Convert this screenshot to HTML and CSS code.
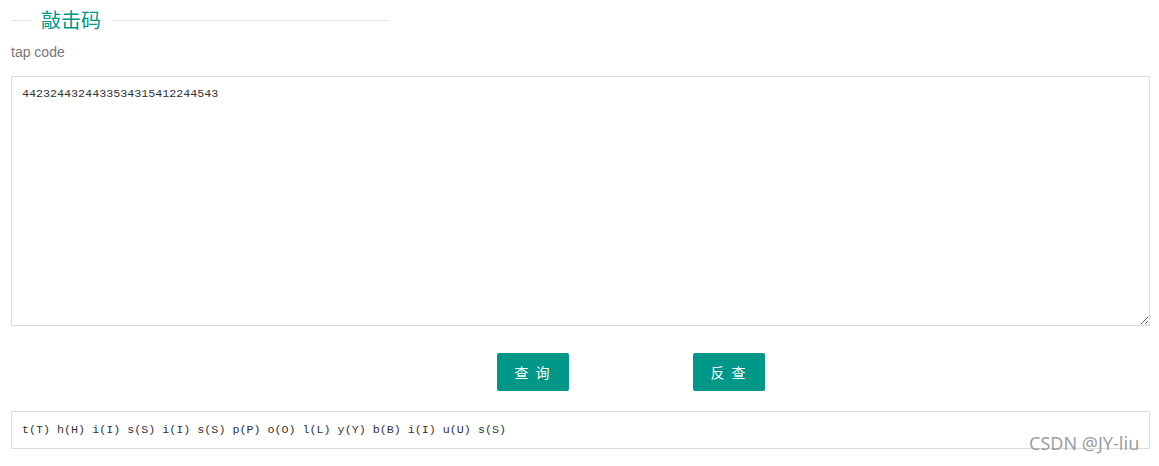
FILE: index.html
```html
<!DOCTYPE html>
<html lang="zh-CN">
<head>
    <meta charset="UTF-8">
    <meta name="viewport" content="width=device-width, initial-scale=1.0">
    <title>敲击码</title>
    <link rel="stylesheet" href="styles.css">
</head>
<body>
    <div class="container">
        <!-- 标题 -->
        <fieldset class="title">
            <legend>敲击码</legend>
        </fieldset>
        <p class="desc">tap code</p>

        <!-- 输入区 -->
        <textarea id="inputText" class="code-input">4423244324433534315412244543</textarea>

        <div class="actions">
            <button type="button" class="btn">查 询</button>
            <button type="button" class="btn">反 查</button>
        </div>

        <!-- 结果 -->
        <div class="result">t(T) h(H) i(I) s(S) i(I) s(S) p(P) o(O) l(L) y(Y) b(B) i(I) u(U) s(S)</div>
    </div>

    <div class="watermark">CSDN @JY-liu</div>
</body>
</html>
```

FILE: styles.css
```css
body {
    margin: 0;
    font-family: "Liberation Sans", Arial, "Noto Sans CJK SC", sans-serif;
    background: white;
    color: #333;
}

.container {
    padding: 0 9px 0 11px;
}

.title {
    width: 379px;
    margin: 5px 0 0 0;
    padding: 0;
    border: none;
    border-top: 1px solid #e6e6e6;
}

.title legend {
    margin-left: 20px;
    padding: 0 10px;
    font-size: 20px;
    line-height: 30px;
    color: #009688;
    font-family: "Noto Sans CJK SC", sans-serif;
}

.desc {
    margin: 7px 0 14px 0;
    font-size: 14px;
    line-height: 20px;
    color: #777;
}

.code-input {
    display: block;
    width: 100%;
    height: 250px;
    margin: 0;
    padding: 9px 10px;
    border: 1px solid #ddd;
    box-sizing: border-box;
    font-family: "Liberation Mono", monospace;
    font-size: 11.7px;
    line-height: 16px;
    color: #333;
    resize: both;
    outline: none;
}

.actions {
    display: flex;
    gap: 124px;
    padding-left: 486px;
    margin-top: 27px;
}

.btn {
    width: 72px;
    height: 38px;
    border: none;
    border-radius: 2px;
    background-color: #009688;
    color: white;
    font-size: 14px;
    font-family: "Noto Sans CJK SC", sans-serif;
    letter-spacing: 2px;
    cursor: pointer;
}

.result {
    margin-top: 20px;
    height: 38px;
    padding: 0 10px;
    border: 1px solid #ddd;
    box-sizing: border-box;
    font-family: "Liberation Mono", monospace;
    font-size: 11.7px;
    line-height: 36px;
    color: #333;
}

.watermark {
    position: absolute;
    left: 1029px;
    top: 431px;
    font-family: "Noto Sans", sans-serif;
    font-size: 18px;
    color: #a0a0a0;
}
```
